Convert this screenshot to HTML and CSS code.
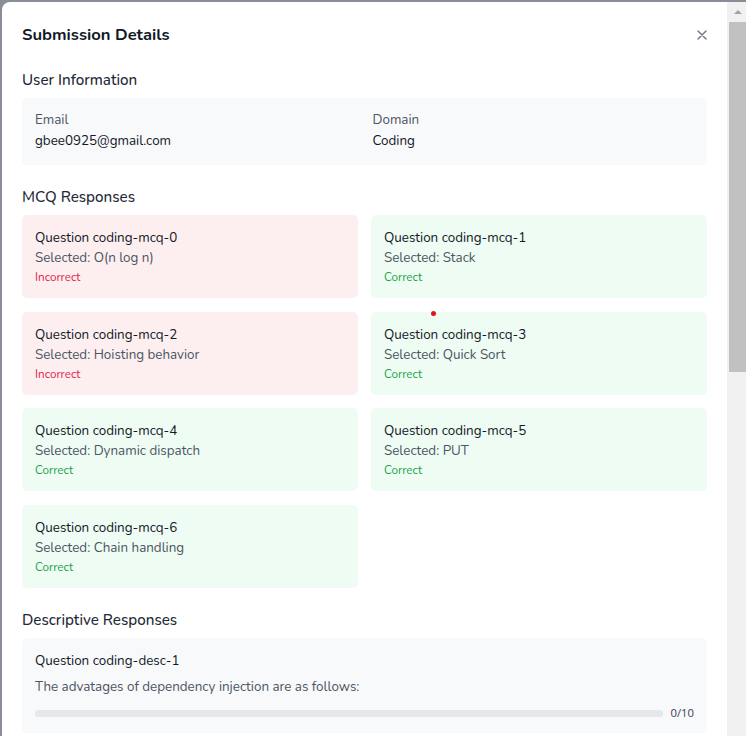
FILE: index.html
```html
<!DOCTYPE html>
<html lang="en">
<head>
<meta charset="utf-8">
<title>Submission Details</title>
<link rel="stylesheet" href="styles.css">
</head>
<body>
<div class="modal">
  <div class="modal-body">
    <header class="modal-header">
      <h1 class="modal-title">Submission Details</h1>
      <button class="close-btn" type="button" aria-label="Close">
        <svg width="10" height="10" viewBox="0 0 10 10"><path d="M1 1L9 9M9 1L1 9" stroke="#6b7280" stroke-width="1.4" stroke-linecap="round"/></svg>
      </button>
    </header>

    <section class="section">
      <h2 class="section-title">User Information</h2>
      <div class="info-box">
        <div class="info-item">
          <div class="info-label">Email</div>
          <div class="info-value">gbee0925@gmail.com</div>
        </div>
        <div class="info-item">
          <div class="info-label">Domain</div>
          <div class="info-value">Coding</div>
        </div>
      </div>
    </section>

    <section class="section">
      <h2 class="section-title">MCQ Responses</h2>
      <div class="mcq-grid">
        <div class="mcq-card wrong">
          <div class="q-title">Question coding-mcq-0</div>
          <div class="q-selected">Selected: O(n log n)</div>
          <div class="q-status">Incorrect</div>
        </div>
        <div class="mcq-card right">
          <div class="q-title">Question coding-mcq-1</div>
          <div class="q-selected">Selected: Stack</div>
          <div class="q-status">Correct</div>
        </div>
        <div class="mcq-card wrong">
          <div class="q-title">Question coding-mcq-2</div>
          <div class="q-selected">Selected: Hoisting behavior</div>
          <div class="q-status">Incorrect</div>
        </div>
        <div class="mcq-card right">
          <div class="q-title">Question coding-mcq-3</div>
          <div class="q-selected">Selected: Quick Sort</div>
          <div class="q-status">Correct</div>
        </div>
        <div class="mcq-card right">
          <div class="q-title">Question coding-mcq-4</div>
          <div class="q-selected">Selected: Dynamic dispatch</div>
          <div class="q-status">Correct</div>
        </div>
        <div class="mcq-card right">
          <div class="q-title">Question coding-mcq-5</div>
          <div class="q-selected">Selected: PUT</div>
          <div class="q-status">Correct</div>
        </div>
        <div class="mcq-card right">
          <div class="q-title">Question coding-mcq-6</div>
          <div class="q-selected">Selected: Chain handling</div>
          <div class="q-status">Correct</div>
        </div>
      </div>
    </section>

    <section class="section">
      <h2 class="section-title">Descriptive Responses</h2>
      <div class="desc-list">
        <div class="desc-card">
          <div class="q-title">Question coding-desc-1</div>
          <div class="desc-answer">The advatages of dependency injection are as follows:</div>
          <div class="score-row"><div class="score-bar"></div><span class="score-text">0/10</span></div>
        </div>
      </div>
    </section>
  </div>
  <div class="scrollbar" aria-hidden="true">
    <div class="sb-button"><span class="sb-arrow"></span></div>
    <div class="sb-thumb"></div>
  </div>
</div>
<span class="cursor-dot"></span>
</body>
</html>
```

FILE: styles.css
```css
html, body {
  margin: 0;
  height: 100%;
}

body {
  background: #898e96;
  overflow: hidden;
  box-sizing: border-box;
  padding: 2px 0 0 2px;
  font-family: "Nunito", "Lato", "Open Sans", sans-serif;
  color: #111827;
}

.modal {
  display: flex;
  width: 746px;
  height: 734px;
  background: #ffffff;
  border-top-left-radius: 8px;
  overflow: hidden;
}

.modal-body {
  flex: 1;
  min-width: 0;
  overflow: hidden;
  padding: 19px 20px 0 20px;
}

.scrollbar {
  width: 21px;
  flex: none;
  display: flex;
  flex-direction: column;
  background: #f1f1f1;
}

.sb-button {
  height: 20px;
  display: flex;
  align-items: center;
  justify-content: center;
}

.sb-arrow {
  width: 0;
  height: 0;
  border-left: 4.5px solid transparent;
  border-right: 4.5px solid transparent;
  border-bottom: 4.5px solid #a3a3a3;
}

.sb-thumb {
  height: 350px;
  margin: 0 2px;
  background: #c1c1c1;
}

.modal-header {
  display: flex;
  align-items: center;
  justify-content: space-between;
  height: 28px;
}

.modal-title {
  margin: 0;
  font-size: 16.6px;
  line-height: 28px;
  font-weight: 700;
  color: #111827;
}

.close-btn {
  border: 0;
  background: none;
  padding: 0;
  width: 10px;
  height: 10px;
  display: flex;
  cursor: pointer;
}

.section {
  margin-top: 18px;
}

.section + .section {
  margin-top: 19px;
}

.section-title {
  margin: 0 0 6px 0;
  padding-top: 1px;
  font-size: 15.2px;
  line-height: 24px;
  font-weight: 500;
  color: #1f2937;
}

.info-box {
  background: #f8f9fa;
  border-radius: 5px;
  padding: 12px 13px 13px;
  display: grid;
  grid-template-columns: 1fr 1fr;
  column-gap: 16px;
}

.info-label {
  font-size: 13.4px;
  line-height: 20px;
  color: #4b5563;
}

.info-value {
  font-size: 13.4px;
  line-height: 22px;
  color: #111827;
}

.mcq-grid {
  display: grid;
  grid-template-columns: 1fr 1fr;
  column-gap: 13px;
  row-gap: 13.7px;
}

.mcq-card {
  border-radius: 5px;
  padding: 13px 13px 13px;
}

.mcq-card.wrong {
  background: #fdefef;
}

.mcq-card.right {
  background: #effcf3;
}

.q-title {
  font-size: 13.4px;
  line-height: 20px;
  color: #111827;
}

.q-selected {
  font-size: 13.4px;
  line-height: 20px;
  color: #4b5563;
}

.q-status {
  margin-top: 1px;
  font-size: 11.7px;
  line-height: 16px;
}

.wrong .q-status {
  color: #e11d48;
}

.right .q-status {
  color: #16a34a;
}

.desc-list {
  display: flex;
  flex-direction: column;
  gap: 14px;
}

.desc-card {
  background: #f8f9fa;
  border-radius: 5px;
  padding: 13px 13px 12px;
}

.desc-answer {
  margin-top: 6px;
  font-size: 13.4px;
  line-height: 20px;
  color: #4b5563;
}

.score-row {
  margin-top: 8px;
  height: 16px;
  display: flex;
  align-items: center;
  gap: 7px;
}

.score-bar {
  flex: 1;
  height: 7px;
  border-radius: 4px;
  background: #e5e7eb;
}

.score-text {
  font-family: "Open Sans", "Liberation Sans", sans-serif;
  font-size: 11.3px;
  line-height: 16px;
  color: #374151;
}

.cursor-dot {
  position: fixed;
  left: 431px;
  top: 311px;
  width: 5px;
  height: 5px;
  border-radius: 50%;
  background: #e3151b;
}
```
